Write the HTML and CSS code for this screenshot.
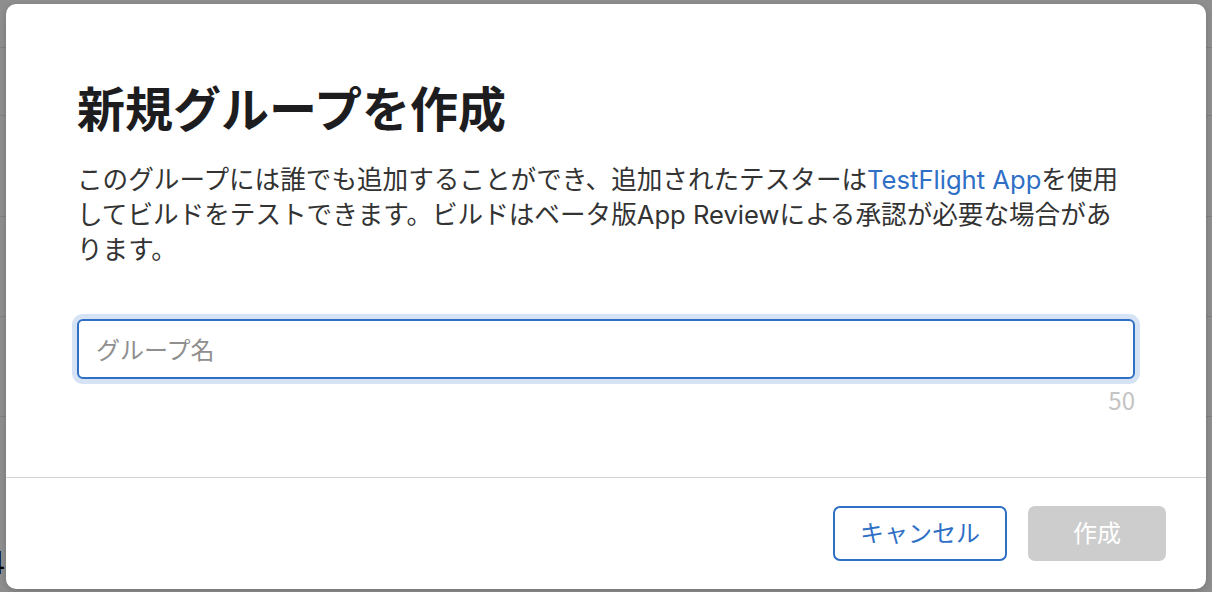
FILE: index.html
```html
<!DOCTYPE html>
<html lang="ja">
<head>
<meta charset="utf-8">
<title>新規グループを作成</title>
<link rel="stylesheet" href="styles.css">
</head>
<body>
<div class="page">
  <div class="page-head">9.0</div>
  <div class="page-row r1"></div>
  <div class="page-row r2"></div>
  <div class="page-row r3"></div>
  <div class="page-row r4"></div>
  <div class="page-row r5"><span class="page-num">4</span></div>
</div>

<div class="modal" role="dialog" aria-labelledby="dlg-title">
  <div class="modal-body">
    <h1 class="modal-title" id="dlg-title">新規グループを作成</h1>
    <p class="modal-text">このグループには誰でも追加することができ、追加されたテスターは<a class="link" href="#">TestFlight App</a>を使用してビルドをテストできます。ビルドはベータ版App Reviewによる承認が必要な場合があります。</p>
    <div class="field">
      <input class="field-input" type="text" placeholder="グループ名" maxlength="50">
      <div class="field-count">50</div>
    </div>
  </div>
  <div class="modal-footer">
    <button class="btn btn-secondary" type="button">キャンセル</button>
    <button class="btn btn-primary" type="button" disabled>作成</button>
  </div>
</div>
</body>
</html>
```

FILE: styles.css
```css
* { box-sizing: border-box; }

html, body {
  margin: 0;
  height: 100%;
}

body {
  background: #8e8e8e;
  font-family: "Noto Sans CJK JP", "Noto Sans", sans-serif;
  overflow: hidden;
}

/* dimmed page behind the dialog */
.page {
  height: 100%;
}
.page-head {
  margin-top: -44px;
  height: 92px;
  padding-left: 2px;
  font-family: "Liberation Sans", sans-serif;
  font-weight: 700;
  font-size: 48px;
  line-height: 48px;
  color: #000;
  border-bottom: 1px solid #7f7f7f;
}
.page-row {
  border-bottom: 1px solid #7f7f7f;
}
.r1 { height: 68px; }
.r2 { height: 101px; }
.r3 { height: 100px; }
.r4 { height: 100px; }
.r5 { height: 180px; border-bottom: none; }
.page-num {
  display: block;
  padding-top: 128px;
  margin-left: -14px;
  font-family: "Liberation Sans", sans-serif;
  font-size: 34px;
  line-height: 34px;
  color: #000;
}

/* dialog */
.modal {
  position: absolute;
  left: 6px;
  top: 4px;
  width: 1200px;
  height: 585px;
  background: #fff;
  border-radius: 10px;
  box-shadow: 0 2px 6px rgba(0, 0, 0, 0.18);
  display: flex;
  flex-direction: column;
  overflow: hidden;
}

.modal-body {
  flex: 1;
  padding: 73px 71px 0;
}

.modal-title {
  margin: 0;
  font-size: 48px;
  line-height: 58px;
  font-weight: 700;
  color: #1d1d1f;
}

.modal-text {
  max-width: 1050px;
  margin: 27px 0 0;
  font-family: "Inter", "Noto Sans CJK JP", sans-serif;
  font-size: 25.6px;
  line-height: 35.2px;
  color: #333;
}

.link {
  color: #2f6fc6;
  text-decoration: none;
}

.field {
  margin-top: 51px;
}

.field-input {
  display: block;
  width: 100%;
  height: 60px;
  margin: 0;
  padding: 0 17px;
  border: 2px solid #2f6fc6;
  border-radius: 6px;
  box-shadow: 0 0 0 5px #d5e3f4;
  font-family: inherit;
  font-size: 24px;
  color: #333;
  outline: none;
  background: #fff;
}
.field-input::placeholder {
  color: #8f8f8f;
}

.field-count {
  margin-top: 6px;
  text-align: right;
  font-size: 24px;
  line-height: 30px;
  color: #c4c4c4;
}

.modal-footer {
  border-top: 1px solid #d4d4d4;
  padding: 28px 40px 28px;
  display: flex;
  justify-content: flex-end;
  gap: 21px;
}

.btn {
  height: 55px;
  margin: 0;
  padding: 0 25px 4px;
  border-radius: 7px;
  font-family: inherit;
  font-size: 24px;
  line-height: 1;
  cursor: pointer;
}
.btn-secondary {
  background: #fff;
  color: #2f6fc6;
  border: 2px solid #2f6fc6;
}
.btn-primary {
  min-width: 138px;
  background: #cdcdcd;
  color: #fff;
  border: none;
}
```
